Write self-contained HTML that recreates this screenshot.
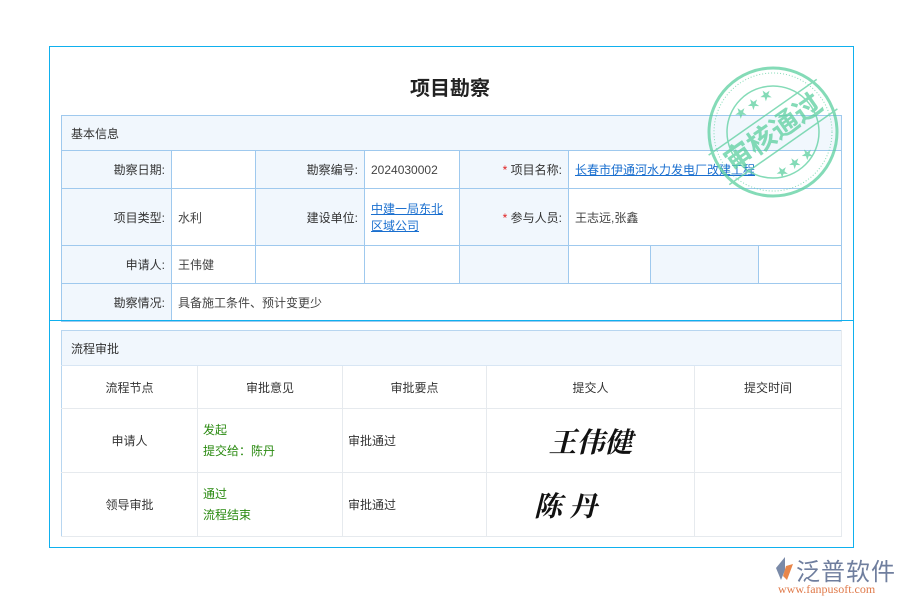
<!DOCTYPE html>
<html><head><meta charset="utf-8"><style>
*{margin:0;padding:0;box-sizing:border-box}
body{width:900px;height:600px;background:#fff;position:relative;overflow:hidden;font-family:"Liberation Sans","Noto Sans CJK SC",sans-serif;font-size:12px;color:#444}
.abs{position:absolute}
.frame{left:49px;top:46px;width:805px;height:502px;border:1px solid #0fb0ee}
.hline{left:49px;top:320px;width:805px;height:1px;background:#0fb0ee}
.title{left:0;width:900px;top:72px;text-align:center;font-size:20px;font-weight:bold;color:#222}
table{border-collapse:collapse;position:absolute;table-layout:fixed}
.t1{left:61px;top:115px;width:780px}
.t1 td{border:1px solid #9fc9ee;height:38px;padding:0 6px;vertical-align:middle}
.t1 .lb{background:#f1f7fd;text-align:right;color:#333}
.t1 .hd{background:#f1f7fd;height:35px;padding-left:9px;color:#333}
a{color:#1a6fcf;text-decoration:underline}
.req{color:#e02020}
.t2{left:61px;top:330px;width:780px;border:1px solid #b8d6f0}
.t2 td{border-right:1px solid #e6eaee;border-bottom:1px solid #e6eaee;text-align:center;color:#333}
.t2 td.hd{background:#f1f7fd;text-align:left;padding-left:9px;height:35px;border-bottom:1px solid #d8e6f4}
.t2 td.g{color:#2a8a10;text-align:left;padding-left:5px;line-height:21px}
.t2 td.l{text-align:left;padding-left:5px}
.t2 td.sig{font-family:"Liberation Serif","Noto Serif CJK SC",serif;font-size:28px;color:#111;font-weight:bold;font-style:italic}
</style></head><body>
<div class="abs frame"></div>
<div class="abs title">项目勘察</div>
<table class="t1">
<colgroup><col style="width:110px"><col style="width:84px"><col style="width:109px"><col style="width:95px"><col style="width:109px"><col style="width:82px"><col style="width:108px"><col style="width:83px"></colgroup>
<tr><td colspan="8" class="hd">基本信息</td></tr>
<tr><td class="lb">勘察日期:</td><td></td><td class="lb">勘察编号:</td><td>2024030002</td><td class="lb"><span class="req">*</span> 项目名称:</td><td colspan="3"><a>长春市伊通河水力发电厂改建工程</a></td></tr>
<tr style="height:57px"><td class="lb">项目类型:</td><td>水利</td><td class="lb">建设单位:</td><td><a>中建一局东北区域公司</a></td><td class="lb"><span class="req">*</span> 参与人员:</td><td colspan="3">王志远,张鑫</td></tr>
<tr><td class="lb">申请人:</td><td>王伟健</td><td></td><td></td><td class="lb"></td><td></td><td class="lb"></td><td></td></tr>
<tr style="height:36px"><td class="lb">勘察情况:</td><td colspan="7">具备施工条件、预计变更少</td></tr>
</table>
<div class="abs hline"></div>
<table class="t2">
<colgroup><col style="width:136px"><col style="width:145px"><col style="width:144px"><col style="width:208px"><col style="width:147px"></colgroup>
<tr><td colspan="5" class="hd">流程审批</td></tr>
<tr style="height:43px"><td>流程节点</td><td>审批意见</td><td>审批要点</td><td>提交人</td><td>提交时间</td></tr>
<tr style="height:64px"><td>申请人</td><td class="g">发起<br>提交给：陈丹</td><td class="l">审批通过</td><td class="sig">王伟健</td><td></td></tr>
<tr style="height:64px"><td>领导审批</td><td class="g">通过<br>流程结束</td><td class="l">审批通过</td><td class="sig" style="padding-right:50px">陈 丹</td><td></td></tr>
</table>
<svg class="abs" style="left:703px;top:62px" width="140" height="140" viewBox="0 0 140 140" opacity="0.75">
<g fill="none" stroke="#5ccf9f">
<circle cx="70" cy="70" r="64" stroke-width="3"/><circle cx="70" cy="70" r="59" stroke-width="1" stroke-dasharray="1 2"/><circle cx="70" cy="70" r="46" stroke-width="1.5"/>
<g transform="rotate(-35 70 70)"><line x1="4" y1="52" x2="136" y2="52" stroke-width="1.5"/><line x1="4" y1="88" x2="136" y2="88" stroke-width="1.5"/></g>
</g>
<g transform="rotate(-35 70 70)" fill="#5ccf9f"><text x="70" y="80" text-anchor="middle" font-family="Noto Sans CJK SC,sans-serif" font-size="28" font-weight="bold">审核通过</text>
<text x="70" y="40" text-anchor="middle" font-size="12">★ ★ ★</text><text x="70" y="112" text-anchor="middle" font-size="12">★ ★ ★</text></g>
</svg>
<svg class="abs" style="left:773px;top:556px" width="22" height="26" viewBox="0 0 22 26"><path d="M12 1 L3 12 L8 24 L12 14 Z" fill="#7a8aa8"/><path d="M13 10 L20 8 L14 24 L10 20 Z" fill="#e8864a"/></svg>
<div class="abs" style="left:796px;top:552px;font-size:24px;color:#6f7e9e;font-family:'Noto Sans CJK SC',sans-serif;letter-spacing:1px">泛普软件</div>
<div class="abs" style="left:778px;top:582px;font-size:12px;color:#e07a4a;font-family:'Liberation Serif',serif">www.fanpusoft.com</div>
</body></html>
